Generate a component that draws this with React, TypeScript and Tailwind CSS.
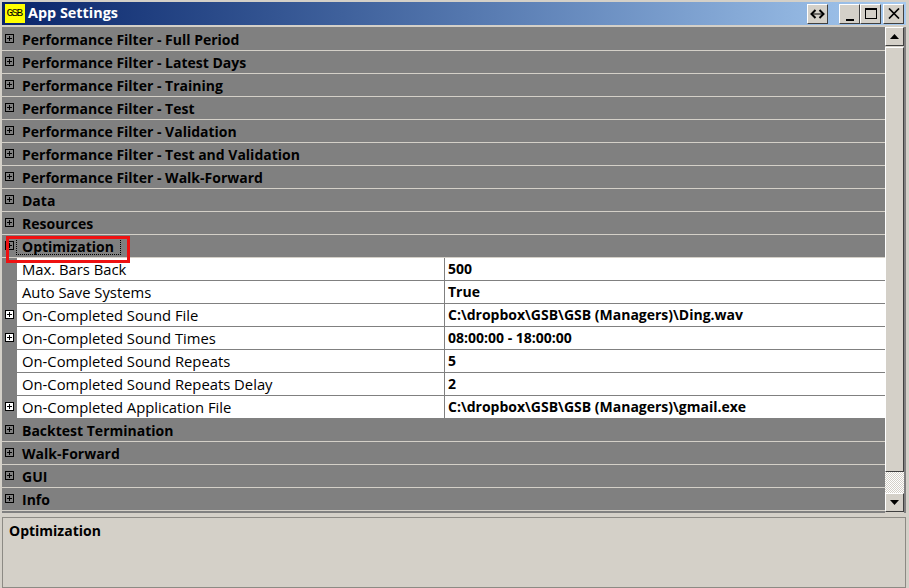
import React from 'react';

const font = { fontFamily: '"Open Sans", "Noto Sans", sans-serif' };

function PlusBox() {
    return (
        <svg width="9" height="9" viewBox="0 0 9 9" className="block" shapeRendering="crispEdges">
            <rect x="0.5" y="0.5" width="8" height="8" fill="none" stroke="#000" />
            <path d="M2 4.5H7M4.5 2V7" stroke="#000" />
        </svg>
    );
}

function CategoryRow({ label, selected }: { label: string; selected?: boolean }) {
    return (
        <div className="relative h-[23px] flex items-center bg-[#808080] border-b border-[#d4d0c8] shrink-0">
            <div className="w-[15px] pl-[3px] shrink-0 flex items-center -mt-[2px]">
                <PlusBox />
            </div>
            <div className={`ml-[-1px] px-[6px] pt-[1px] flex items-center font-bold text-[14px] text-black ${selected ? 'h-[18px] w-[105px] outline-1 outline-dotted outline-black -outline-offset-1' : 'h-[21px]'}`}>
                {label}
            </div>
            {selected && (
                <div className="absolute left-[4px] top-[1px] w-[124px] h-[27px] border-[3px] border-[#ee1111]" />
            )}
        </div>
    );
}

function PropRow({ label, value, expand }: { label: string; value: string; expand?: boolean }) {
    return (
        <div className="h-[23px] flex bg-[#808080] shrink-0">
            <div className="w-[15px] pl-[3px] shrink-0 flex items-center -mt-[2px]">
                {expand && <div className="bg-white"><PlusBox /></div>}
            </div>
            <div className="flex-1 flex bg-white border-b border-[#808080]">
                <div className="w-[428px] pl-[5px] flex items-center border-r border-[#808080] text-[14.8px] text-black shrink-0">{label}</div>
                <div className="flex-1 pl-[3px] pb-[2px] flex items-center text-[14px] font-bold text-black">{value}</div>
            </div>
        </div>
    );
}

function RaisedButton({ className, children }: { className: string; children: React.ReactNode }) {
    return (
        <div className={`flex items-center justify-center bg-[#d4d0c8] border border-t-white border-l-white border-r-[#404040] border-b-[#404040] shrink-0 ${className}`}>
            {children}
        </div>
    );
}

const before = [
    'Performance Filter - Full Period',
    'Performance Filter - Latest Days',
    'Performance Filter - Training',
    'Performance Filter - Test',
    'Performance Filter - Validation',
    'Performance Filter - Test and Validation',
    'Performance Filter - Walk-Forward',
    'Data',
    'Resources',
];

const props = [
    { label: 'Max. Bars Back', value: '500' },
    { label: 'Auto Save Systems', value: 'True' },
    { label: 'On-Completed Sound File', value: 'C:\\dropbox\\GSB\\GSB (Managers)\\Ding.wav', expand: true },
    { label: 'On-Completed Sound Times', value: '08:00:00 - 18:00:00', expand: true },
    { label: 'On-Completed Sound Repeats', value: '5' },
    { label: 'On-Completed Sound Repeats Delay', value: '2' },
    { label: 'On-Completed Application File', value: 'C:\\dropbox\\GSB\\GSB (Managers)\\gmail.exe', expand: true },
];

const after = ['Backtest Termination', 'Walk-Forward', 'GUI', 'Info'];

export default function App() {
    return (
        <div style={font} className="w-[909px] h-[588px] bg-[#d4d0c8] flex flex-col overflow-hidden p-[2px] pb-0 pr-[3px]">
            {/* Title bar */}
            <div className="h-[23px] shrink-0 flex items-center bg-gradient-to-r from-[#0a246a] to-[#a6caf0] pl-[3px] pr-[2px]">
                <div className="w-[20px] h-[19px] bg-[#ffff00] flex items-center justify-center text-[11px] tracking-[-1.6px] pr-[2px] text-black shrink-0" style={{ fontFamily: '"Liberation Mono", monospace' }}>GSB</div>
                <span className="ml-[3px] pb-[2px] font-bold text-[14.4px] text-white">App Settings</span>
                <div className="flex-1" />
                <RaisedButton className="w-[21px] h-[20px] mr-[11px]">
                    <svg width="15" height="10" viewBox="0 0 15 10">
                        <path d="M5.5 1L1.5 5L5.5 9M9.5 1L13.5 5L9.5 9" fill="none" stroke="#000" strokeWidth="2" />
                        <path d="M2 5H13" stroke="#000" strokeWidth="1" />
                    </svg>
                </RaisedButton>
                <RaisedButton className="w-[21px] h-[20px] items-end pb-[2px]">
                    <div className="w-[8px] h-[2px] bg-black mt-[10px]" />
                </RaisedButton>
                <RaisedButton className="w-[21px] h-[20px]">
                    <div className="w-[12px] h-[11px] border border-t-2 border-black" />
                </RaisedButton>
                <RaisedButton className="w-[21px] h-[20px] ml-[2px]">
                    <svg width="12" height="11" viewBox="0 0 12 11">
                        <path d="M1 0.5L11 10.5M11 0.5L1 10.5" stroke="#000" strokeWidth="1.7" />
                    </svg>
                </RaisedButton>
            </div>

            {/* Grid and scrollbar */}
            <div className="mt-[2px] h-[486px] shrink-0 flex bg-[#808080]">
                <div className="w-[883px] pt-[1px] flex flex-col">
                    {before.map((c) => <CategoryRow key={c} label={c} />)}
                    <CategoryRow label="Optimization" selected />
                    {props.map((p) => <PropRow key={p.label} {...p} />)}
                    {after.map((c) => <CategoryRow key={c} label={c} />)}
                </div>
                <div className="w-[19px] pb-[1px] flex flex-col bg-[#d4d0c8]">
                    <RaisedButton className="w-[19px] h-[19px]">
                        <svg width="9" height="5" viewBox="0 0 9 5"><path d="M4.5 0L9 5H0z" fill="#000" /></svg>
                    </RaisedButton>
                    <RaisedButton className="w-[19px] h-[425px] mt-[1px]"><span /></RaisedButton>
                    <div className="flex-1 bg-[repeating-conic-gradient(#d4d0c8_0_25%,#ffffff_0_50%)] bg-[length:2px_2px]" />
                    <RaisedButton className="w-[19px] h-[19px]">
                        <svg width="9" height="5" viewBox="0 0 9 5"><path d="M0 0H9L4.5 5z" fill="#000" /></svg>
                    </RaisedButton>
                </div>
            </div>

            {/* Description panel */}
            <div className="mt-[4px] flex-1 border border-[#8c8a84] px-[6px] pt-[2px] font-bold text-[14px] text-black">
                Optimization
            </div>
        </div>
    );
}
